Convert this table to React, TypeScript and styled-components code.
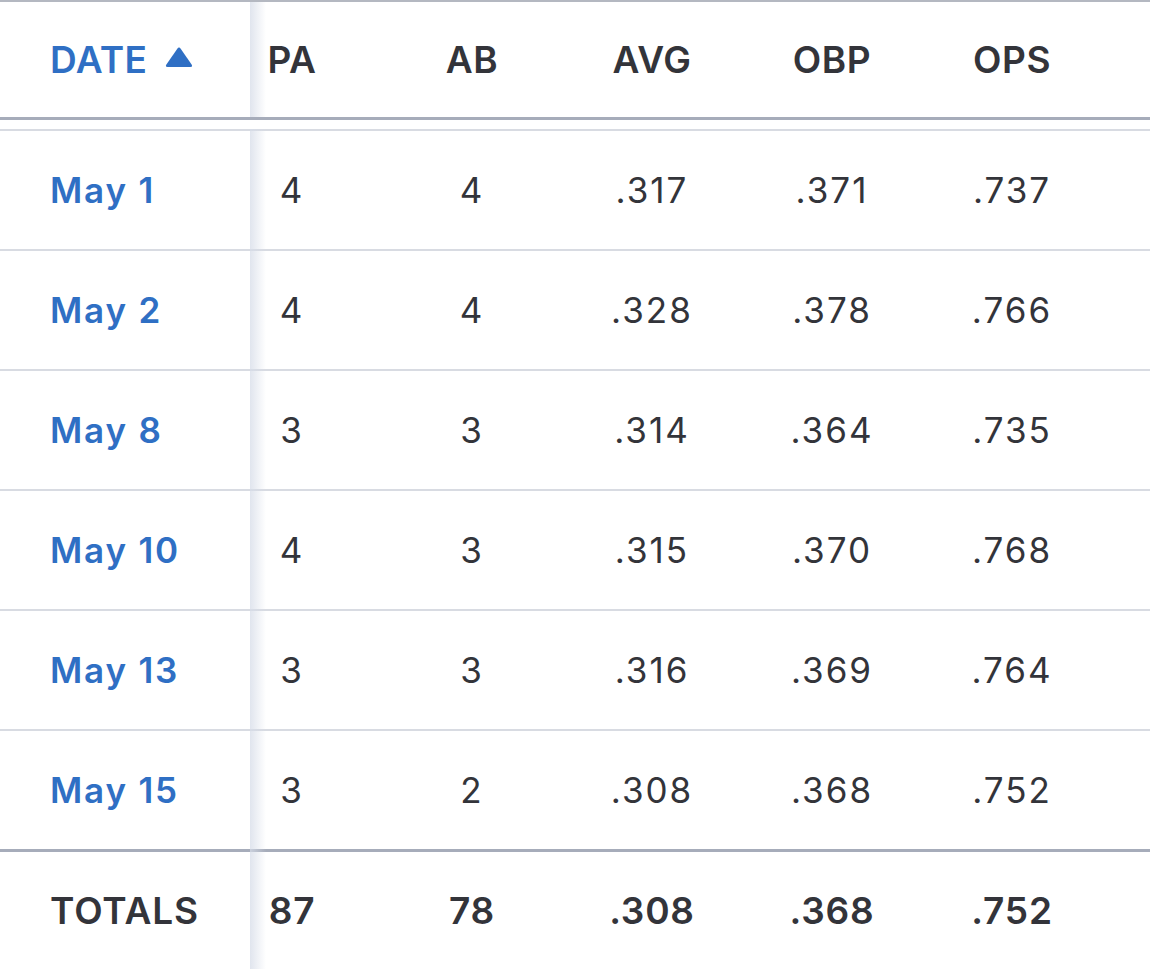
import React from "react";
import styled, { createGlobalStyle } from "styled-components";

const GlobalStyle = createGlobalStyle`
  html, body {
    margin: 0;
    padding: 0;
    background: #ffffff;
  }
  body {
    font-family: Inter, "Noto Sans", "Liberation Sans", sans-serif;
    -webkit-font-smoothing: antialiased;
  }
`;

const BLUE = "#2f6fc4";
const INK = "#33343a";
const RULE_STRONG = "#a6acba";
const RULE_LIGHT = "#d8dbe2";
const COLUMNS = "250px 132px 180px 180px 180px 180px 48px";

type Row = {
  date: string;
  pa: string;
  ab: string;
  avg: string;
  obp: string;
  ops: string;
};

const rows: Row[] = [
  { date: "May 1", pa: "4", ab: "4", avg: ".317", obp: ".371", ops: ".737" },
  { date: "May 2", pa: "4", ab: "4", avg: ".328", obp: ".378", ops: ".766" },
  { date: "May 8", pa: "3", ab: "3", avg: ".314", obp: ".364", ops: ".735" },
  { date: "May 10", pa: "4", ab: "3", avg: ".315", obp: ".370", ops: ".768" },
  { date: "May 13", pa: "3", ab: "3", avg: ".316", obp: ".369", ops: ".764" },
  { date: "May 15", pa: "3", ab: "2", avg: ".308", obp: ".368", ops: ".752" },
];

const Table = styled.div`
  width: 1150px;
  height: 969px;
  overflow: hidden;
  display: flex;
  flex-direction: column;
  border-top: 2px solid #b4b8c1;
  box-sizing: border-box;
`;

const HeaderRow = styled.div`
  display: grid;
  grid-template-columns: ${COLUMNS};
  height: 115px;
  border-bottom: 3px solid ${RULE_STRONG};
  flex-shrink: 0;
`;

const Body = styled.div`
  display: flex;
  flex-direction: column;
  padding-top: 9px;
  border-bottom: 3px solid ${RULE_STRONG};
  flex-shrink: 0;
`;

const BodyRow = styled.div`
  display: grid;
  grid-template-columns: ${COLUMNS};
  height: 118px;
  border-top: 2px solid ${RULE_LIGHT};
  flex-shrink: 0;
`;

const TotalsRow = styled.div`
  display: grid;
  grid-template-columns: ${COLUMNS};
  flex: 1;
`;

const Frozen = styled.div<{ $weight: number; $size: number; $color: string; $spacing: number; $lift: number }>`
  position: relative;
  display: flex;
  align-items: center;
  padding-left: 50px;
  font-size: ${({ $size }) => $size}px;
  font-weight: ${({ $weight }) => $weight};
  color: ${({ $color }) => $color};
  letter-spacing: ${({ $spacing }) => $spacing}px;

  &::after {
    content: "";
    position: absolute;
    top: ${({ $lift }) => -$lift}px;
    bottom: 0;
    right: -16px;
    width: 16px;
    background: linear-gradient(to right, rgba(214, 220, 232, 0.75), rgba(255, 255, 255, 0));
    pointer-events: none;
  }
`;

const Cell = styled.div<{ $weight: number; $size: number; $spacing: number; $lead?: boolean }>`
  display: flex;
  align-items: center;
  justify-content: center;
  padding-right: ${({ $lead }) => ($lead ? "48px" : "0")};
  font-size: ${({ $size }) => $size}px;
  font-weight: ${({ $weight }) => $weight};
  color: ${INK};
  letter-spacing: ${({ $spacing }) => $spacing}px;
`;

const SortArrow = styled.svg`
  width: 28px;
  height: 21px;
  margin-left: 18px;
  margin-top: -4px;
`;

const stats: (keyof Row)[] = ["pa", "ab", "avg", "obp", "ops"];

export default function App() {
  return (
    <>
      <GlobalStyle />
      <Table>
        <HeaderRow>
          <Frozen $weight={600} $size={37} $color={BLUE} $spacing={0.4} $lift={2}>
            DATE
            <SortArrow viewBox="0 0 28 21">
              <path
                d="M12.3 1.8 Q14 -0.6 15.7 1.8 L26.6 17.6 Q28 20 25.4 20 L2.6 20 Q0 20 1.4 17.6 Z"
                fill={BLUE}
              />
            </SortArrow>
          </Frozen>
          {["PA", "AB", "AVG", "OBP", "OPS"].map((h, i) => (
            <Cell key={h} $weight={600} $size={37} $spacing={0.6} $lead={i === 0}>
              {h}
            </Cell>
          ))}
          <div />
        </HeaderRow>
        <Body>
          {rows.map((r) => (
            <BodyRow key={r.date}>
              <Frozen $weight={600} $size={35} $color={BLUE} $spacing={1.8} $lift={2}>
                {r.date}
              </Frozen>
              {stats.map((k, i) => (
                <Cell key={k} $weight={400} $size={35} $spacing={2} $lead={i === 0}>
                  {r[k]}
                </Cell>
              ))}
              <div />
            </BodyRow>
          ))}
        </Body>
        <TotalsRow>
          <Frozen $weight={600} $size={37} $color={INK} $spacing={0.9} $lift={3}>
            TOTALS
          </Frozen>
          {["87", "78", ".308", ".368", ".752"].map((v, i) => (
            <Cell key={i} $weight={600} $size={37} $spacing={0.8} $lead={i === 0}>
              {v}
            </Cell>
          ))}
          <div />
        </TotalsRow>
      </Table>
    </>
  );
}
